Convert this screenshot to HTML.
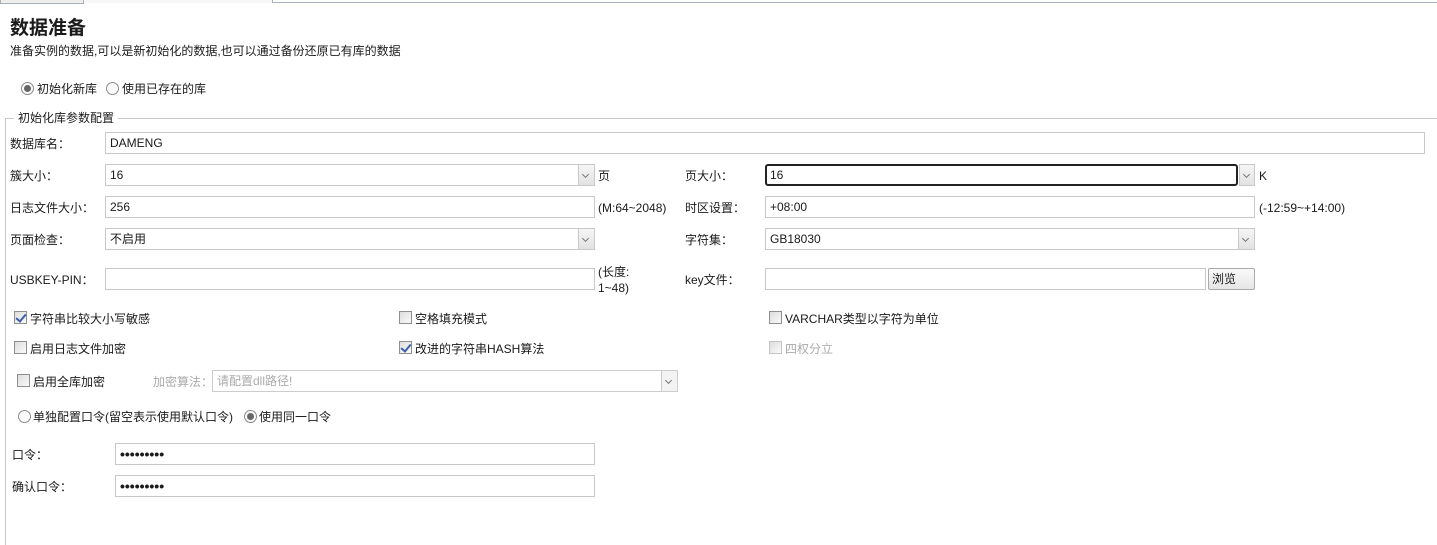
<!DOCTYPE html>
<html><head><meta charset="utf-8"><style>
*{box-sizing:border-box;margin:0;padding:0}
body{width:1437px;height:545px;background:#fff;position:relative;overflow:hidden;font-family:"Liberation Sans","Microsoft YaHei","Noto Sans CJK SC",sans-serif;font-size:12px;color:#1a1a1a}
.a{position:absolute;white-space:nowrap;line-height:14px}
.in{position:absolute;border:1px solid #c9c9c9;background:#fff;height:22px;padding-left:4px;line-height:20px;font-size:12px}
.dd{position:absolute;top:0;right:0;width:16px;height:20px;border-left:1px solid #c9c9c9;background:linear-gradient(#f6f6f6,#e2e2e2)}
.dd:after{content:"";position:absolute;left:4px;top:7px;width:4px;height:4px;border-right:1.5px solid #777;border-bottom:1.5px solid #777;transform:rotate(45deg)}
.cb{position:absolute;width:13px;height:13px;border:1px solid #8f8f8f;background:linear-gradient(135deg,#ddd,#fafafa)}
.cb.c:after{content:"";position:absolute;left:3px;top:0px;width:4px;height:8px;border-right:2px solid #3b5ea8;border-bottom:2px solid #3b5ea8;transform:rotate(40deg)}
.rd{position:absolute;width:13px;height:13px;border:1px solid #8a8a8a;border-radius:50%;background:#fafafa}
.rd.c:after{content:"";position:absolute;left:2px;top:2px;width:7px;height:7px;border-radius:50%;background:#666}
.g{color:#aaa}
.pw{font-weight:bold;letter-spacing:0px;font-size:14px}
</style></head><body>
<div style="position:absolute;left:0;top:0;width:84px;height:4px;border:1px solid #a8b0bc;border-top:none;background:#eee"></div>
<div style="position:absolute;left:272px;top:2px;width:1165px;height:1px;background:#a8b0bc"></div>
<div style="position:absolute;left:272px;top:0;width:1px;height:3px;background:#a8b0bc"></div>
<div style="position:absolute;left:85px;top:0;width:187px;height:3px;background:#f7f7f7"></div>

<div class="a" style="left:10px;top:18px;font-size:19px;font-weight:bold;line-height:22px">数据准备</div>
<div class="a" style="left:10px;top:44px">准备实例的数据,可以是新初始化的数据,也可以通过备份还原已有库的数据</div>

<div class="rd c" style="left:21px;top:82px"></div><div class="a" style="left:37px;top:82px">初始化新库</div>
<div class="rd" style="left:106px;top:82px"></div><div class="a" style="left:122px;top:82px">使用已存在的库</div>

<div style="position:absolute;left:5px;top:118px;width:1432px;height:1px;background:#c8c8c8"></div>
<div style="position:absolute;left:5px;top:118px;width:1px;height:427px;background:#c8c8c8"></div>
<div class="a" style="left:14px;top:111px;background:#fff;padding:0 4px">初始化库参数配置</div>

<div class="a" style="left:10px;top:137px">数据库名：</div>
<div class="in" style="left:105px;top:132px;width:1320px">DAMENG</div>

<div class="a" style="left:10px;top:169px">簇大小：</div>
<div class="in" style="left:105px;top:164px;width:490px">16<div class="dd"></div></div>
<div class="a" style="left:598px;top:169px">页</div>
<div class="a" style="left:685px;top:169px">页大小：</div>
<div class="in" style="left:765px;top:164px;width:473px;border:2px solid #222;border-radius:3px;line-height:18px;padding-left:3px">16</div>
<div class="in" style="left:1238px;top:164px;width:17px;border:none"><div class="dd" style="border:1px solid #c9c9c9;height:22px"></div></div>
<div class="a" style="left:1259px;top:169px">K</div>

<div class="a" style="left:10px;top:201px">日志文件大小：</div>
<div class="in" style="left:105px;top:196px;width:490px">256</div>
<div class="a" style="left:598px;top:201px">(M:64~2048)</div>
<div class="a" style="left:685px;top:201px">时区设置：</div>
<div class="in" style="left:765px;top:196px;width:490px">+08:00</div>
<div class="a" style="left:1259px;top:201px">(-12:59~+14:00)</div>

<div class="a" style="left:10px;top:233px">页面检查：</div>
<div class="in" style="left:105px;top:228px;width:490px">不启用<div class="dd"></div></div>
<div class="a" style="left:685px;top:233px">字符集：</div>
<div class="in" style="left:765px;top:228px;width:490px">GB18030<div class="dd"></div></div>

<div class="a" style="left:10px;top:273px">USBKEY-PIN：</div>
<div class="in" style="left:105px;top:268px;width:490px"></div>
<div class="a" style="left:598px;top:265px">(长度:</div>
<div class="a" style="left:598px;top:281px">1~48)</div>
<div class="a" style="left:685px;top:273px">key文件：</div>
<div class="in" style="left:765px;top:268px;width:441px"></div>
<div class="in" style="left:1208px;top:268px;width:47px;background:linear-gradient(#fafafa,#e6e6e6);border-color:#aaa;border-radius:2px;padding-left:3px">浏览</div>

<div class="cb c" style="left:14px;top:311px"></div><div class="a" style="left:30px;top:312px">字符串比较大小写敏感</div>
<div class="cb" style="left:399px;top:311px"></div><div class="a" style="left:415px;top:312px">空格填充模式</div>
<div class="cb" style="left:769px;top:311px"></div><div class="a" style="left:785px;top:312px">VARCHAR类型以字符为单位</div>

<div class="cb" style="left:14px;top:341px"></div><div class="a" style="left:30px;top:342px">启用日志文件加密</div>
<div class="cb c" style="left:399px;top:341px"></div><div class="a" style="left:415px;top:342px">改进的字符串HASH算法</div>
<div class="cb" style="left:769px;top:341px;border-color:#c4c4c4"></div><div class="a g" style="left:785px;top:342px">四权分立</div>

<div class="cb" style="left:17px;top:374px"></div><div class="a" style="left:33px;top:375px">启用全库加密</div>
<div class="a g" style="left:153px;top:375px">加密算法：</div>
<div class="in g" style="left:212px;top:370px;width:466px;border-color:#ccc">请配置dll路径!<div class="dd" style="background:#f3f3f3"></div></div>

<div class="rd" style="left:18px;top:410px"></div><div class="a" style="left:33px;top:410px">单独配置口令(留空表示使用默认口令)</div>
<div class="rd c" style="left:244px;top:410px"></div><div class="a" style="left:259px;top:410px">使用同一口令</div>

<div class="a" style="left:12px;top:448px">口令：</div>
<div class="in pw" style="left:115px;top:443px;width:480px">•••••••••</div>
<div class="a" style="left:12px;top:480px">确认口令：</div>
<div class="in pw" style="left:115px;top:475px;width:480px">•••••••••</div>
</body></html>
